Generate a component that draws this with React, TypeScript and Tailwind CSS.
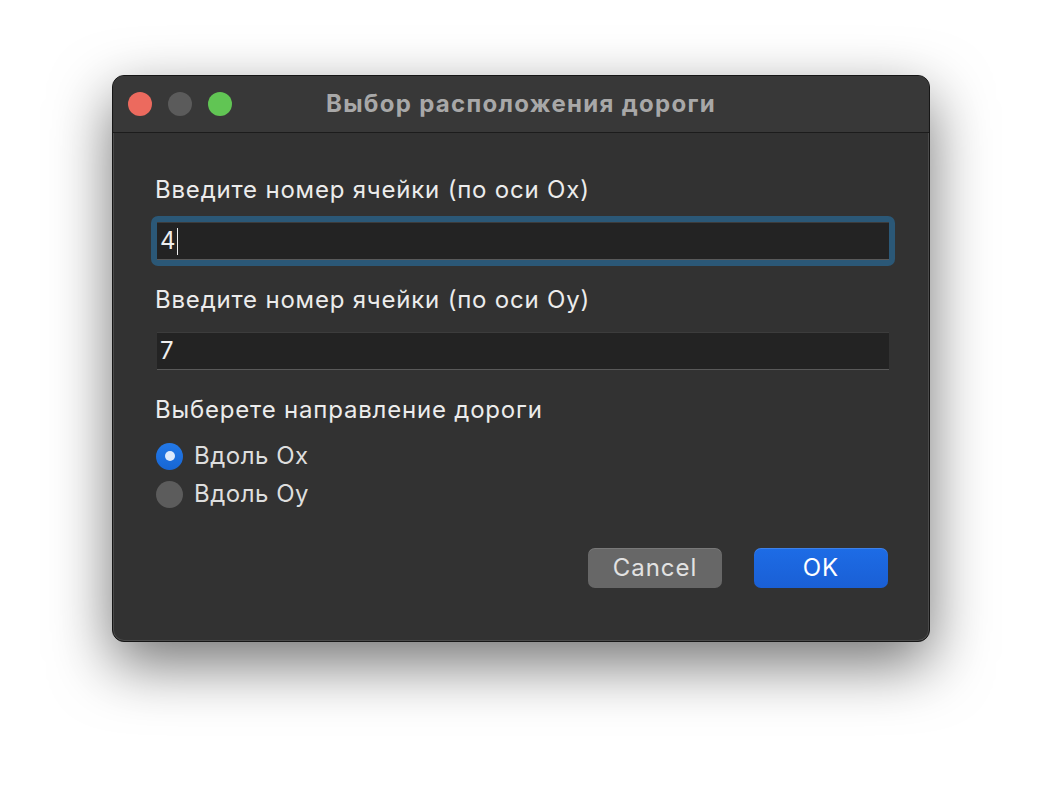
const font = { fontFamily: 'Inter, "Noto Sans", "DejaVu Sans", sans-serif' };

function TrafficLights() {
  return (
    <div className="flex items-center gap-[16px] pl-[15px]">
      <div className="w-[24px] h-[24px] rounded-full bg-[#ec6a5e]" />
      <div className="w-[24px] h-[24px] rounded-full bg-[#5b5b5b]" />
      <div className="w-[24px] h-[24px] rounded-full bg-[#61c554]" />
    </div>
  );
}

function Field({ value, focused }: { value: string; focused?: boolean }) {
  return (
    <div className={`p-[6px] rounded-[7px] ${focused ? 'bg-[#2b5877]' : ''}`}>
      <div className="h-[38px] bg-[#232323] border-t border-[#3c3c3c] border-b border-b-[#595959] flex items-center pl-[3px]">
        <span className="text-[24px] leading-[26px] text-[#eeeeee]">{value}</span>
        {focused && <span className="ml-[1px] w-[1px] h-[27px] bg-[#eeeeee]" />}
      </div>
    </div>
  );
}

function Radio({ label, checked }: { label: string; checked?: boolean }) {
  return (
    <div className="h-[38px] flex items-center gap-[11px]">
      {checked ? (
        <div className="w-[27px] h-[27px] rounded-full bg-gradient-to-b from-[#2379e8] to-[#1766d4] flex items-center justify-center">
          <div className="w-[10px] h-[10px] rounded-full bg-[#dde9fb]" />
        </div>
      ) : (
        <div className="w-[27px] h-[27px] rounded-full bg-[#5c5c5c]" />
      )}
      <span className="text-[24px] leading-[26px] tracking-[0.5px] text-[#dedede]">{label}</span>
    </div>
  );
}

export default function App() {
  return (
    <div className="w-[1042px] h-[790px] bg-white pl-[112px] pt-[75px]" style={font}>
      <div className="w-[818px] h-[567px] rounded-[12px] bg-[#323232] border border-[#161616] shadow-[0_22px_60px_rgba(0,0,0,0.55),inset_0_0_0_1px_rgba(255,255,255,0.12)] overflow-hidden flex flex-col">
        {/* Title bar */}
        <div className="h-[57px] shrink-0 bg-[#383838] border-b border-[#1c1c1c] grid grid-cols-[1fr_auto_1fr] items-center">
          <TrafficLights />
          <div className="text-[24px] font-bold tracking-[1.3px] text-[#a8a8a8] leading-[26px]">Выбор расположения дороги</div>
          <div />
        </div>

        {/* Body */}
        <div className="flex flex-col pl-[38px] pr-[34px] pt-[44px]">
          <div className="pl-[4px] text-[24px] leading-[26px] tracking-[0.8px] text-[#ececec]">Введите номер ячейки (по оси Ox)</div>
          <div className="mt-[13px]">
            <Field value="4" focused />
          </div>
          <div className="mt-[21px] pl-[4px] text-[24px] leading-[26px] tracking-[0.8px] text-[#ececec]">Введите номер ячейки (по оси Oy)</div>
          <div className="mt-[13px]">
            <Field value="7" />
          </div>
          <div className="mt-[21px] pl-[4px] text-[24px] leading-[26px] tracking-[0.8px] text-[#ececec]">Выберете направление дороги</div>
          <div className="mt-[14px] pl-[5px] flex flex-col">
            <Radio label="Вдоль Ox" checked />
            <Radio label="Вдоль Oy" />
          </div>
          <div className="mt-[35px] mr-[7px] flex justify-end gap-[32px]">
            <div className="w-[134px] h-[40px] rounded-[7px] bg-[#676767] shadow-[inset_0_1px_0_rgba(255,255,255,0.12)] flex items-center justify-center text-[24px] tracking-[1px] text-[#e2e2e2]">
              Cancel
            </div>
            <div className="w-[134px] h-[40px] rounded-[7px] bg-gradient-to-b from-[#1d6ce6] to-[#1a5fd5] shadow-[inset_0_1px_0_rgba(255,255,255,0.15)] flex items-center justify-center text-[24px] tracking-[1px] text-white">
              OK
            </div>
          </div>
        </div>
      </div>
    </div>
  );
}
